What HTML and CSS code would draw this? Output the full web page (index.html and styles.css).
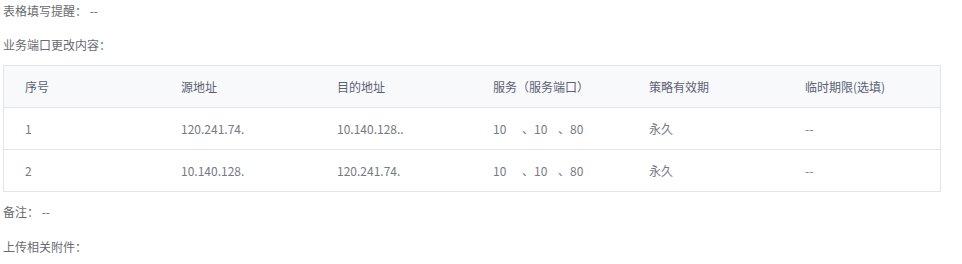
FILE: index.html
```html
<!DOCTYPE html>
<html lang="zh-CN">
<head>
<meta charset="utf-8">
<title>业务端口更改</title>
<link rel="stylesheet" href="styles.css">
</head>
<body>
<div class="page">
  <div class="label">表格填写提醒： --</div>
  <div class="label label-gap">业务端口更改内容：</div>
  <div class="table">
    <div class="row head">
      <div class="cell">序号</div>
      <div class="cell">源地址</div>
      <div class="cell">目的地址</div>
      <div class="cell">服务（服务端口）</div>
      <div class="cell">策略有效期</div>
      <div class="cell">临时期限(选填)</div>
    </div>
    <div class="row">
      <div class="cell">1</div>
      <div class="cell">120.241.74.</div>
      <div class="cell">10.140.128..</div>
      <div class="cell svc"><span class="port">10</span><span class="port">、10</span>、80</div>
      <div class="cell">永久</div>
      <div class="cell">--</div>
    </div>
    <div class="row">
      <div class="cell">2</div>
      <div class="cell">10.140.128.</div>
      <div class="cell">120.241.74.</div>
      <div class="cell svc"><span class="port">10</span><span class="port">、10</span>、80</div>
      <div class="cell">永久</div>
      <div class="cell">--</div>
    </div>
  </div>
  <div class="label note">备注： --</div>
  <div class="label upload">上传相关附件：</div>
</div>
</body>
</html>
```

FILE: styles.css
```css
html, body {
  margin: 0;
  padding: 0;
  background: #ffffff;
}

body {
  font-family: "Noto Sans CJK SC", "Noto Sans", "Liberation Sans", sans-serif;
  font-size: 12px;
  color: #686b70;
}

.page {
  padding: 0 0 0 3px;
  width: 938px;
}

.label {
  line-height: 22px;
  height: 22px;
  color: #686b70;
}

.label-gap {
  margin-top: 12px;
}

.table {
  margin-top: 9px;
  border: 1px solid #e2e4e8;
  width: 936px;
}

.row {
  display: grid;
  grid-template-columns: repeat(6, 1fr);
  height: 41px;
  border-bottom: 1px solid #e2e4e8;
  align-items: center;
  color: #767a82;
}

.row:last-child {
  border-bottom: none;
}

.row.head {
  background: #f8f9fb;
  color: #5a6172;
}

.cell {
  padding-left: 21px;
  white-space: nowrap;
  line-height: 20px;
}

.port {
  display: inline-block;
  width: 29px;
}

.port + .port {
  width: 36px;
}

.note {
  margin-top: 9px;
}

.upload {
  margin-top: 13px;
}
```
